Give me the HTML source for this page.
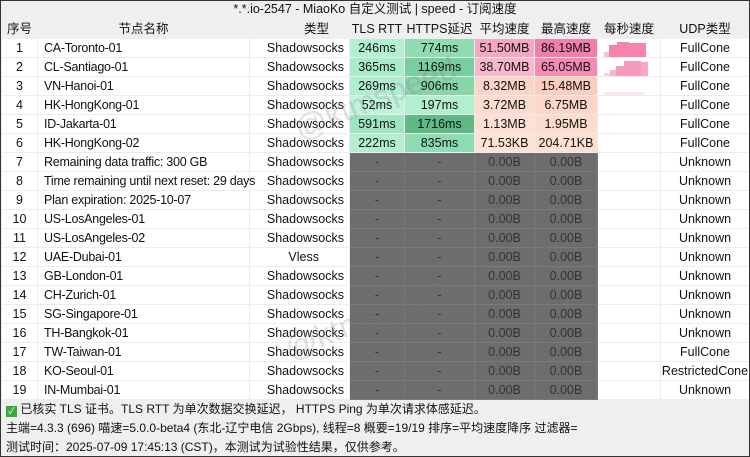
<!DOCTYPE html><html><head><meta charset="utf-8"><style>
*{margin:0;padding:0;box-sizing:border-box}
body{width:750px;height:457px;background:#fff;font-family:"Liberation Sans","Noto Sans CJK SC",sans-serif;font-size:12.5px;color:#111;position:relative;overflow:hidden}
.frame{position:absolute;left:0;top:0;width:750px;height:457px;border:1.5px solid #333}
.title{position:absolute;left:0;top:0;width:750px;height:19px;background:#efefef;text-align:center;line-height:19px;font-size:12.5px}
table{position:absolute;left:1px;top:19px;border-collapse:collapse;table-layout:fixed;width:748px}
td{height:19px;line-height:18px;border:1px solid #ececec;white-space:nowrap;overflow:hidden;text-align:center;padding:0}
tr.h td{background:#efefef;border-color:#efefef}
td.n{text-align:left;padding-left:6px;overflow:visible;letter-spacing:-0.25px}
td.t{text-align:right;padding-right:5px}
.g{background:#6d6d6d;color:#333;border-color:#7a7a7a}
.foot{position:absolute;left:0;width:750px;height:19px;line-height:19px;padding-left:6px;background:#efefef;font-size:12px}
.wm{position:absolute;color:rgba(120,120,120,.22);font-size:32px;transform:rotate(-22deg);white-space:nowrap}
</style></head><body>
<div class="title">*.*.io-2547 - MiaoKo 自定义测试 | speed - 订阅速度</div>
<table>
<colgroup><col style="width:36px"><col style="width:212px"><col style="width:100px"><col style="width:55px"><col style="width:70px"><col style="width:60px"><col style="width:63px"><col style="width:63px"><col style="width:89px"></colgroup>
<tr class="h"><td>序号</td><td>节点名称</td><td class="t" style="padding-right:20px">类型</td><td>TLS RTT</td><td>HTTPS延迟</td><td>平均速度</td><td>最高速度</td><td>每秒速度</td><td>UDP类型</td></tr>
<tr><td>1</td><td class="n">CA-Toronto-01</td><td class="t">Shadowsocks</td><td style="background:#b3efd2">246ms</td><td style="background:#8fdcb2">774ms</td><td style="background:#f6a7c3">51.50MB</td><td style="background:#f27eab">86.19MB</td><td style="position:relative"><svg width="63" height="19" style="position:absolute;left:0;top:0"><rect x="6" y="13" width="6" height="6" fill="#f9c2d4"/><rect x="11" y="6" width="8" height="13" fill="#f583ae"/><rect x="19" y="3" width="12" height="16" fill="#f583ae"/><rect x="31" y="4" width="17" height="15" fill="#f583ae"/></svg></td><td>FullCone</td></tr>
<tr><td>2</td><td class="n">CL-Santiago-01</td><td class="t">Shadowsocks</td><td style="background:#a9ecca">365ms</td><td style="background:#77cf9f">1169ms</td><td style="background:#f8b7cc">38.70MB</td><td style="background:#f58bb2">65.05MB</td><td style="position:relative"><svg width="63" height="19" style="position:absolute;left:0;top:0"><rect x="6" y="15" width="6" height="4" fill="#fbd0dd"/><rect x="12" y="12" width="6" height="7" fill="#f9b6cb"/><rect x="18" y="8" width="8" height="11" fill="#f79abb"/><rect x="26" y="3" width="17" height="16" fill="#f79abb"/><rect x="43" y="4" width="7" height="15" fill="#f8a9c4"/></svg></td><td>FullCone</td></tr>
<tr><td>3</td><td class="n">VN-Hanoi-01</td><td class="t">Shadowsocks</td><td style="background:#b0eed0">269ms</td><td style="background:#85d7aa">906ms</td><td style="background:#fbd6c8">8.32MB</td><td style="background:#fbcdbf">15.48MB</td><td style="position:relative"><svg width="63" height="19" style="position:absolute;left:0;top:0"><rect x="6" y="15" width="40" height="4" fill="#fbe6ea"/></svg></td><td>FullCone</td></tr>
<tr><td>4</td><td class="n">HK-HongKong-01</td><td class="t">Shadowsocks</td><td style="background:#bff3da">52ms</td><td style="background:#b4eed1">197ms</td><td style="background:#fcdccf">3.72MB</td><td style="background:#fcd6c8">6.75MB</td><td></td><td>FullCone</td></tr>
<tr><td>5</td><td class="n">ID-Jakarta-01</td><td class="t">Shadowsocks</td><td style="background:#9fe6c0">591ms</td><td style="background:#5fb985">1716ms</td><td style="background:#fde0d3">1.13MB</td><td style="background:#fcdccf">1.95MB</td><td></td><td>FullCone</td></tr>
<tr><td>6</td><td class="n">HK-HongKong-02</td><td class="t">Shadowsocks</td><td style="background:#b2efd1">222ms</td><td style="background:#8edcb1">835ms</td><td style="background:#fde2d5">71.53KB</td><td style="background:#fde0d3">204.71KB</td><td></td><td>FullCone</td></tr>
<tr><td>7</td><td class="n">Remaining data traffic: 300 GB</td><td class="t">Shadowsocks</td><td class="g">-</td><td class="g">-</td><td class="g">0.00B</td><td class="g">0.00B</td><td></td><td>Unknown</td></tr>
<tr><td>8</td><td class="n">Time remaining until next reset: 29 days</td><td class="t">Shadowsocks</td><td class="g">-</td><td class="g">-</td><td class="g">0.00B</td><td class="g">0.00B</td><td></td><td>Unknown</td></tr>
<tr><td>9</td><td class="n">Plan expiration: 2025-10-07</td><td class="t">Shadowsocks</td><td class="g">-</td><td class="g">-</td><td class="g">0.00B</td><td class="g">0.00B</td><td></td><td>Unknown</td></tr>
<tr><td>10</td><td class="n">US-LosAngeles-01</td><td class="t">Shadowsocks</td><td class="g">-</td><td class="g">-</td><td class="g">0.00B</td><td class="g">0.00B</td><td></td><td>Unknown</td></tr>
<tr><td>11</td><td class="n">US-LosAngeles-02</td><td class="t">Shadowsocks</td><td class="g">-</td><td class="g">-</td><td class="g">0.00B</td><td class="g">0.00B</td><td></td><td>Unknown</td></tr>
<tr><td>12</td><td class="n">UAE-Dubai-01</td><td class="t" style="padding-right:30px">Vless</td><td class="g">-</td><td class="g">-</td><td class="g">0.00B</td><td class="g">0.00B</td><td></td><td>Unknown</td></tr>
<tr><td>13</td><td class="n">GB-London-01</td><td class="t">Shadowsocks</td><td class="g">-</td><td class="g">-</td><td class="g">0.00B</td><td class="g">0.00B</td><td></td><td>Unknown</td></tr>
<tr><td>14</td><td class="n">CH-Zurich-01</td><td class="t">Shadowsocks</td><td class="g">-</td><td class="g">-</td><td class="g">0.00B</td><td class="g">0.00B</td><td></td><td>Unknown</td></tr>
<tr><td>15</td><td class="n">SG-Singapore-01</td><td class="t">Shadowsocks</td><td class="g">-</td><td class="g">-</td><td class="g">0.00B</td><td class="g">0.00B</td><td></td><td>Unknown</td></tr>
<tr><td>16</td><td class="n">TH-Bangkok-01</td><td class="t">Shadowsocks</td><td class="g">-</td><td class="g">-</td><td class="g">0.00B</td><td class="g">0.00B</td><td></td><td>Unknown</td></tr>
<tr><td>17</td><td class="n">TW-Taiwan-01</td><td class="t">Shadowsocks</td><td class="g">-</td><td class="g">-</td><td class="g">0.00B</td><td class="g">0.00B</td><td></td><td>FullCone</td></tr>
<tr><td>18</td><td class="n">KO-Seoul-01</td><td class="t">Shadowsocks</td><td class="g">-</td><td class="g">-</td><td class="g">0.00B</td><td class="g">0.00B</td><td></td><td>RestrictedCone</td></tr>
<tr><td>19</td><td class="n">IN-Mumbai-01</td><td class="t">Shadowsocks</td><td class="g">-</td><td class="g">-</td><td class="g">0.00B</td><td class="g">0.00B</td><td></td><td>Unknown</td></tr>
</table>
<div class="foot" style="top:400px"><span style="display:inline-block;width:11px;height:11px;background:#3aa83a;color:#fff;font-size:9px;line-height:11px;text-align:center;vertical-align:-1px">✓</span> 已核实 TLS 证书。TLS RTT 为单次数据交换延迟， HTTPS Ping 为单次请求体感延迟。</div>
<div class="foot" style="top:419px">主端=4.3.3 (696) 喵速=5.0.0-beta4 (东北-辽宁电信 2Gbps), 线程=8 概要=19/19 排序=平均速度降序 过滤器=</div>
<div class="foot" style="top:438px">测试时间：2025-07-09 17:45:13 (CST)，本测试为试验性结果，仅供参考。</div>
<div class="wm" style="left:290px;top:80px">@ktmspeed</div>
<div class="wm" style="left:280px;top:300px">@ktmspeed</div>
<div class="frame"></div>
</body></html>
